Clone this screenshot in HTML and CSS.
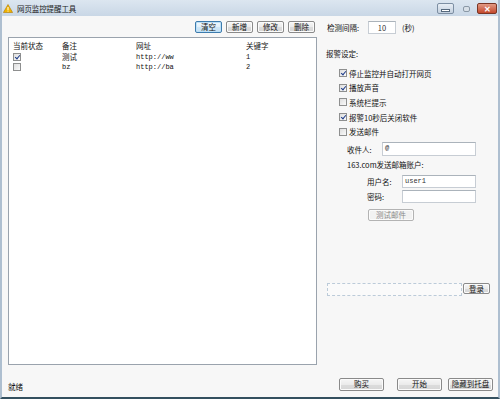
FILE: index.html
```html
<!DOCTYPE html>
<html>
<head>
<meta charset="utf-8">
<link rel="stylesheet" href="styles.css">
</head>
<body>
<div class="window">
  <div class="titlebar">
    <svg class="warn" width="10" height="9" viewBox="0 0 10 9"><path d="M5 0.5 L9.6 8.5 L0.4 8.5 Z" fill="#f0b400" stroke="#b07800" stroke-width="0.6"/><rect x="4.5" y="3" width="1" height="3" fill="#fff"/><rect x="4.5" y="6.6" width="1" height="1" fill="#fff"/></svg>
    <span class="title">网页监控提醒工具</span>
    <div class="controls">
      <div class="ctl min"><span></span></div>
      <div class="ctl max"><span></span></div>
      <div class="ctl close">✕</div>
    </div>
  </div>
  <div class="client">
    <div class="left">
      <div class="toolbar">
        <button class="btn focus">清空</button>
        <button class="btn">新增</button>
        <button class="btn">修改</button>
        <button class="btn">删除</button>
      </div>
      <div class="list">
        <div class="row head">
          <span class="c1">当前状态</span><span class="c2">备注</span><span class="c3">网址</span><span class="c4">关键字</span>
        </div>
        <div class="row">
          <span class="c1"><i class="cb on"></i></span><span class="c2">测试</span><span class="c3 mono">http://ww</span><span class="c4 mono">1</span>
        </div>
        <div class="row">
          <span class="c1"><i class="cb"></i></span><span class="c2 mono">bz</span><span class="c3 mono">http://ba</span><span class="c4 mono">2</span>
        </div>
      </div>
    </div>
    <div class="right">
      <div class="interval">
        <span class="lbl">检测间隔:</span>
        <span class="input small">10</span>
        <span class="sec">(秒)</span>
      </div>
      <div class="section">报警设定:</div>
      <div class="checks">
        <label class="chk"><i class="cb on"></i>停止监控并自动打开网页</label>
        <label class="chk"><i class="cb on"></i>播放声音</label>
        <label class="chk"><i class="cb"></i>系统栏提示</label>
        <label class="chk"><i class="cb on"></i>报警10秒后关闭软件</label>
        <label class="chk"><i class="cb"></i>发送邮件</label>
      </div>
      <div class="field recv"><span class="flbl">收件人:</span><span class="input wide mono">@</span></div>
      <div class="acct">163.com发送邮箱账户:</div>
      <div class="field sub"><span class="flbl2">用户名:</span><span class="input mid mono">user1</span></div>
      <div class="field sub"><span class="flbl2">密码:</span><span class="input mid"></span></div>
      <div class="testrow"><button class="btn dis">测试邮件</button></div>
      <div class="spacer"></div>
      <div class="loginrow"><span class="dashbox"></span><button class="btn login">登录</button></div>
    </div>
  </div>
  <div class="footer">
    <span class="status">就绪</span>
    <div class="fbtns">
      <button class="btn wbtn">购买</button>
      <button class="btn wbtn b2">开始</button>
      <button class="btn wbtn b3">隐藏到托盘</button>
    </div>
  </div>
</div>
</body>
</html>
```

FILE: styles.css
```css
* { box-sizing: border-box; }
html, body { margin: 0; padding: 0; }
body {
  width: 500px;
  height: 399px;
  font-family: "Noto Sans CJK SC", "Noto Sans", sans-serif;
  font-size: 7.5px;
  color: #111;
  background: #f7f7f7;
}
.window {
  width: 500px;
  height: 399px;
  display: flex;
  flex-direction: column;
  background: #f7f7f7;
  border-left: 2px solid #aebfd0;
  border-right: 2px solid #aebfd0;
  border-bottom: 2px solid #34505f;
}
.titlebar {
  height: 16px;
  display: flex;
  align-items: center;
  background: linear-gradient(#dce6f0, #c9d7e6);
  padding-left: 1px;
  flex: none;
}
.warn { margin-right: 4px; }
.title { color: #1c1c1c; font-size: 7.5px; letter-spacing: -0.1px; }
.controls {
  margin-left: auto;
  display: flex;
  align-items: flex-start;
  height: 16px;
  padding-top: 3px;
}
.ctl {
  height: 11px;
  border: 1px solid #7d8fa3;
  border-radius: 2px;
}
.min {
  width: 17px;
  background: linear-gradient(#e8eef5, #c3d0de);
  display: flex; align-items: center; justify-content: center;
}
.min span { width: 7px; background: #fff; border: 1px solid #56697d; box-sizing: content-box; height: 1px; margin-top: 3px; }
.max {
  width: 12px;
  margin-left: 6px;
  border: none;
  display: flex; align-items: center; justify-content: center;
}
.max span { width: 7px; height: 6px; border: 1px solid #8a98a6; border-radius: 2px; background: #d8e0e8; }
.close {
  width: 20px;
  margin-left: 5px;
  margin-right: 1px;
  background: linear-gradient(#e29a84, #c4482c);
  border-color: #7a3524;
  color: #fff;
  font-size: 8px;
  line-height: 9px;
  text-align: center;
  font-weight: bold;
}
.client {
  flex: 1;
  display: flex;
  padding: 5px 0 0 6px;
}
.left {
  width: 311px;
  display: flex;
  flex-direction: column;
}
.toolbar {
  display: flex;
  justify-content: flex-end;
  gap: 4px;
  padding-right: 2px;
  height: 12px;
  margin-bottom: 4px;
}
.btn {
  font-family: inherit;
  font-size: 7.5px;
  color: #111;
  height: 12px;
  width: 27px;
  padding: 0;
  line-height: 10px;
  border: 1px solid #8a8a8a;
  border-radius: 2px;
  background: linear-gradient(#f6f6f6 0%, #ebebeb 50%, #dcdcdc 51%, #d6d6d6 100%);
  box-shadow: inset 0 0 0 1px #fbfbfb;
}
.btn.focus {
  border-color: #3d7bad;
  background: linear-gradient(#f0f8fd 0%, #e2f0fa 50%, #cfe6f6 51%, #c4e0f4 100%);
  box-shadow: inset 0 0 0 1px #bde0f7;
}
.list {
  height: 328px;
  background: #fff;
  border: 1px solid #9aa3ad;
  padding-top: 1px;
}
.row {
  display: flex;
  height: 10px;
  line-height: 10px;
  align-items: center;
}
.row.head { height: 13px; line-height: 13px; }
.c1 { width: 53px; padding-left: 4px; display: flex; align-items: center; }
.c2 { width: 74px; }
.c3 { width: 110px; }
.c4 { width: 60px; }
.mono { font-family: "Liberation Mono", "DejaVu Sans Mono", monospace; font-size: 7px; }
.cb {
  display: inline-block;
  width: 8px;
  height: 8px;
  border: 1px solid #8e8f8f;
  background: linear-gradient(135deg, #dedede, #fafafa);
  position: relative;
  flex: none;
}
.cb.on::after {
  content: "";
  position: absolute;
  left: 2px;
  top: 0px;
  width: 2px;
  height: 4px;
  border-right: 1.3px solid #1e3d8a;
  border-bottom: 1.3px solid #1e3d8a;
  transform: rotate(40deg);
}
.right {
  flex: 1;
  display: flex;
  flex-direction: column;
  padding-left: 9px;
  padding-right: 8px;
}
.interval {
  display: flex;
  align-items: center;
  height: 13px;
}
.lbl { width: 42px; padding-left: 1px; }
.input {
  display: inline-block;
  height: 13px;
  background: #fff;
  border: 1px solid #c7cdd4;
  border-top-color: #abb3bb;
  line-height: 11px;
  padding-left: 2px;
  color: #333;
}
.input.small { width: 28px; text-align: center; padding-left: 0; }
.sec { margin-left: 6px; }
.section { margin-top: 15px; height: 10px; line-height: 10px; padding-left: 0; }
.checks {
  margin-top: 7px;
  padding-left: 13px;
  display: flex;
  flex-direction: column;
}
.chk {
  display: flex;
  align-items: center;
  height: 14.6px;
  gap: 2px;
}
.field { display: flex; align-items: center; }
.recv { margin-top: 3px; padding-left: 21px; height: 15px; }
.flbl { width: 35px; }
.input.wide { width: 94px; height: 14px; }
.acct { padding-left: 21px; margin-top: 3px; height: 10px; line-height: 10px; }
.sub { padding-left: 41px; height: 15px; }
.acct + .sub { margin-top: 4px; }
.flbl2 { width: 35px; }
.input.mid { width: 74px; height: 13px; }
.testrow { padding-left: 42px; margin-top: 5px; }
.btn.dis { width: 46px; height: 12px; color: #8a8a8a; border-color: #b3b3b3; background: #f2f2f2; }
.spacer { flex: 1; }
.loginrow { display: flex; align-items: flex-start; margin-bottom: 77px; padding-left: 1px; }
.dashbox {
  width: 135px;
  height: 13px;
  border: 1px dashed #bccbd9;
  background: #fafafa;
}
.btn.login { width: 27px; height: 11px; line-height: 9px; margin-left: 1px; }
.footer {
  height: 24px;
  display: flex;
  align-items: center;
  padding-left: 6px;
  padding-right: 5px;
  flex: none;
}
.status { margin-top: 3px; }
.fbtns { margin-left: auto; display: flex; margin-top: -2px; }
.wbtn { width: 45px; height: 13px; }
.b2 { margin-left: 13px; }
.b3 { margin-left: 6px; }
```
